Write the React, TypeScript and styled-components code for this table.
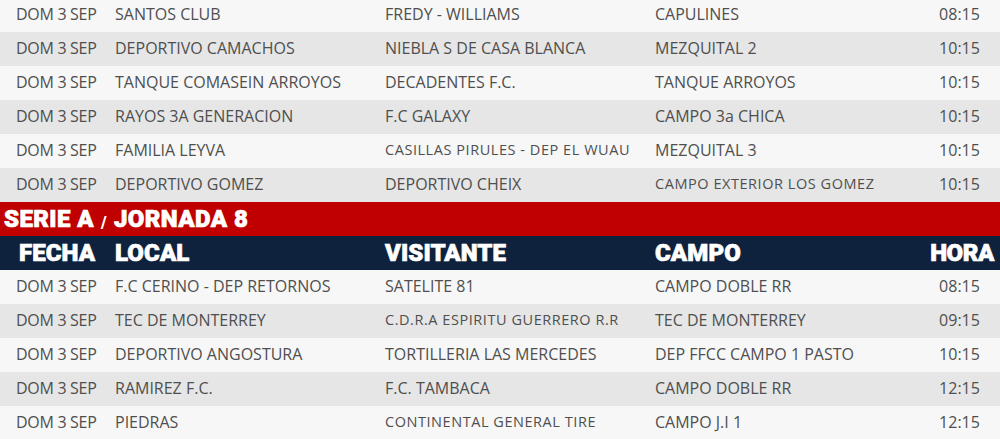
import React from 'react';
import styled, { createGlobalStyle } from 'styled-components';

type Match = {
  date: string;
  local: string;
  visitor: string;
  field: string;
  time: string;
  smallVisitor?: boolean;
  smallField?: boolean;
};

const firstBlock: Match[] = [
  { date: 'DOM 3 SEP', local: 'SANTOS CLUB', visitor: 'FREDY - WILLIAMS', field: 'CAPULINES', time: '08:15' },
  { date: 'DOM 3 SEP', local: 'DEPORTIVO CAMACHOS', visitor: 'NIEBLA S DE CASA BLANCA', field: 'MEZQUITAL 2', time: '10:15' },
  { date: 'DOM 3 SEP', local: 'TANQUE COMASEIN ARROYOS', visitor: 'DECADENTES F.C.', field: 'TANQUE ARROYOS', time: '10:15' },
  { date: 'DOM 3 SEP', local: 'RAYOS 3A GENERACION', visitor: 'F.C GALAXY', field: 'CAMPO 3a CHICA', time: '10:15' },
  { date: 'DOM 3 SEP', local: 'FAMILIA LEYVA', visitor: 'CASILLAS PIRULES - DEP EL WUAU', field: 'MEZQUITAL 3', time: '10:15', smallVisitor: true },
  { date: 'DOM 3 SEP', local: 'DEPORTIVO GOMEZ', visitor: 'DEPORTIVO CHEIX', field: 'CAMPO EXTERIOR LOS GOMEZ', time: '10:15', smallField: true },
];

const serieA: Match[] = [
  { date: 'DOM 3 SEP', local: 'F.C CERINO - DEP RETORNOS', visitor: 'SATELITE 81', field: 'CAMPO DOBLE RR', time: '08:15' },
  { date: 'DOM 3 SEP', local: 'TEC DE MONTERREY', visitor: 'C.D.R.A ESPIRITU GUERRERO R.R', field: 'TEC DE MONTERREY', time: '09:15', smallVisitor: true },
  { date: 'DOM 3 SEP', local: 'DEPORTIVO ANGOSTURA', visitor: 'TORTILLERIA LAS MERCEDES', field: 'DEP FFCC CAMPO 1 PASTO', time: '10:15' },
  { date: 'DOM 3 SEP', local: 'RAMIREZ F.C.', visitor: 'F.C. TAMBACA', field: 'CAMPO DOBLE RR', time: '12:15' },
  { date: 'DOM 3 SEP', local: 'PIEDRAS', visitor: 'CONTINENTAL GENERAL TIRE', field: 'CAMPO J.I 1', time: '12:15', smallVisitor: true },
];

const GlobalStyle = createGlobalStyle`
  html, body {
    margin: 0;
    padding: 0;
    background: #ffffff;
  }
  body {
    font-family: 'Open Sans', 'Liberation Sans', sans-serif;
    overflow: hidden;
  }
`;

const Schedule = styled.div`
  width: 1000px;
  margin-top: -2px;
  display: flex;
  flex-direction: column;
`;

const Row = styled.div<{ $shade: boolean }>`
  display: grid;
  grid-template-columns: 99px 270px 270px 270px 1fr;
  align-items: center;
  height: 34px;
  padding-left: 16px;
  background: ${({ $shade }) => ($shade ? '#e6e6e6' : '#f7f7f7')};
  color: #4f4f4f;
`;

const Cell = styled.div<{ $small?: boolean }>`
  font-size: ${({ $small }) => ($small ? '14.5px' : '16px')};
  letter-spacing: ${({ $small }) => ($small ? '0.55px' : '0')};
  font-weight: 400;
  white-space: nowrap;
  padding-bottom: 3px;
`;

const DateCell = styled(Cell)`
  letter-spacing: -0.3px;
`;

const TimeCell = styled(Cell)`
  text-align: center;
  padding-right: 6px;
`;

const SectionTitle = styled.div`
  height: 34px;
  background: #c00000;
  color: #ffffff;
  display: flex;
  align-items: center;
  padding-left: 4px;
  font-family: Roboto, 'Liberation Sans', sans-serif;
  font-weight: 900;
  font-size: 24px;
  letter-spacing: 0.4px;
  -webkit-text-stroke: 0.7px #ffffff;
`;

const Slash = styled.span`
  font-size: 16px;
  -webkit-text-stroke: 0;
  margin: 6px 7px 0;
`;

const HeaderRow = styled.div`
  display: grid;
  grid-template-columns: 96px 270px 270px 270px 1fr;
  align-items: center;
  height: 34px;
  padding-left: 19px;
  padding-right: 6px;
  background: #0f223d;
  color: #ffffff;
  font-family: Roboto, 'Liberation Sans', sans-serif;
  font-weight: 900;
  font-size: 24px;
  letter-spacing: 0.1px;
  -webkit-text-stroke: 0.7px #ffffff;
`;

const HeaderTime = styled.div`
  text-align: right;
  letter-spacing: -0.4px;
`;

function MatchRows({ matches }: { matches: Match[] }) {
  return (
    <>
      {matches.map((m, i) => (
        <Row key={m.local} $shade={i % 2 === 1}>
          <DateCell>{m.date}</DateCell>
          <Cell>{m.local}</Cell>
          <Cell $small={m.smallVisitor}>{m.visitor}</Cell>
          <Cell $small={m.smallField}>{m.field}</Cell>
          <TimeCell>{m.time}</TimeCell>
        </Row>
      ))}
    </>
  );
}

export default function App() {
  return (
    <>
      <GlobalStyle />
      <Schedule>
        <MatchRows matches={firstBlock} />
        <SectionTitle>
          SERIE A<Slash>/</Slash>JORNADA 8
        </SectionTitle>
        <HeaderRow>
          <div>FECHA</div>
          <div>LOCAL</div>
          <div>VISITANTE</div>
          <div>CAMPO</div>
          <HeaderTime>HORA</HeaderTime>
        </HeaderRow>
        <MatchRows matches={serieA} />
      </Schedule>
    </>
  );
}
